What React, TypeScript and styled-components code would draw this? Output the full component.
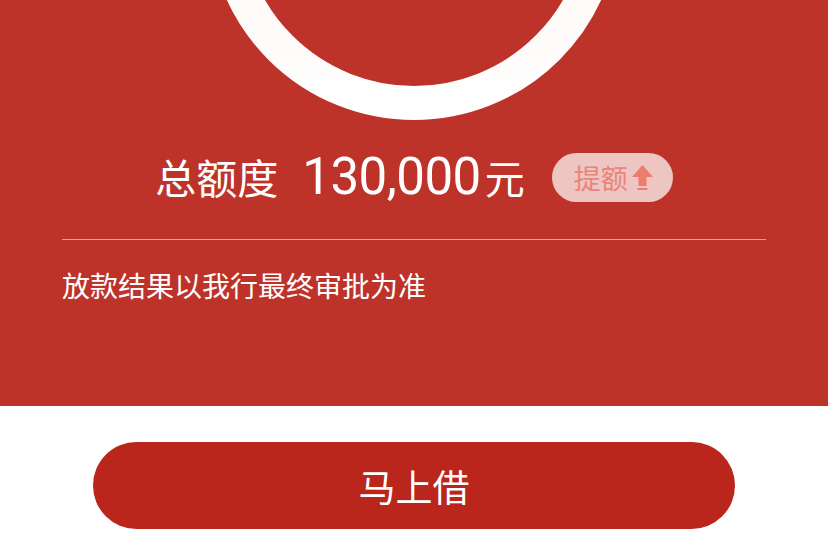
import React from "react";
import styled, { createGlobalStyle } from "styled-components";

const GlobalStyle = createGlobalStyle`
  html, body {
    margin: 0;
    padding: 0;
    background: #ffffff;
  }
  body {
    font-family: "Noto Sans CJK SC", "Liberation Sans", sans-serif;
  }
`;

const RingArt = () => (
  <svg width="828" height="121" viewBox="0 0 828 121">
    <defs>
      <linearGradient id="ringFill" x1="0" y1="0" x2="0" y2="1">
        <stop offset="0" stopColor="#f7ebe3" />
        <stop offset="1" stopColor="#ffffff" />
      </linearGradient>
    </defs>
    <circle
      cx="414"
      cy="-86"
      r="189"
      fill="none"
      stroke="url(#ringFill)"
      strokeWidth="34"
    />
  </svg>
);

const UpArrow = () => (
  <svg width="21" height="26" viewBox="0 0 21 26">
    <path d="M10.5 0 L21 12 L14.5 12 L14.5 21 L6.5 21 L6.5 12 L0 12 Z" fill="#ec7d6e" />
    <rect x="5.5" y="23" width="10" height="2" fill="#ec7d6e" />
  </svg>
);

export default function App() {
  return (
    <Page>
      <GlobalStyle />
      <Hero>
        <RingWrap>
          <RingArt />
        </RingWrap>
        <AmountRow>
          <Amount>
            <Label>总额度</Label>
            <Digits>130,000</Digits>
            <Unit>元</Unit>
          </Amount>
          <RaiseBadge>
            提额
            <UpArrow />
          </RaiseBadge>
        </AmountRow>
        <Divider />
        <Note>放款结果以我行最终审批为准</Note>
      </Hero>
      <Footer>
        <BorrowButton>马上借</BorrowButton>
      </Footer>
    </Page>
  );
}

const Page = styled.div`
  width: 828px;
  height: 546px;
  overflow: hidden;
  background: #ffffff;
`;

const Hero = styled.section`
  height: 406px;
  background: #be3329;
  display: flex;
  flex-direction: column;
`;

const RingWrap = styled.div`
  height: 121px;
  line-height: 0;
`;

const AmountRow = styled.div`
  margin-top: 32px;
  height: 49px;
  display: flex;
  align-items: center;
  justify-content: center;
  gap: 27px;
`;

const Amount = styled.div`
  display: flex;
  align-items: baseline;
  color: #ffffff;
  line-height: 1;
  transform: translateY(-1px);
`;

const Label = styled.span`
  font-family: "Noto Sans CJK SC", sans-serif;
  font-size: 41px;
  margin-right: 24px;
`;

const Digits = styled.span`
  font-family: "Roboto", "Liberation Sans", sans-serif;
  font-weight: 400;
  font-size: 51px;
  letter-spacing: -0.5px;
`;

const Unit = styled.span`
  font-family: "Noto Sans CJK SC", sans-serif;
  font-size: 40px;
  margin-left: 4px;
`;

const RaiseBadge = styled.div`
  height: 49px;
  width: 121px;
  box-sizing: border-box;
  border-radius: 25px;
  background: #edc5c2;
  color: #ea8478;
  font-size: 27px;
  display: flex;
  align-items: center;
  justify-content: center;
  gap: 4px;
  padding-left: 2px;
`;

const Divider = styled.hr`
  margin: 37px 62px 0;
  border: none;
  height: 1px;
  background: rgba(255, 255, 255, 0.55);
`;

const Note = styled.p`
  margin: 27px 62px 0;
  color: #ffffff;
  font-size: 28px;
  line-height: 36px;
`;

const Footer = styled.div`
  padding-top: 36px;
  display: flex;
  justify-content: center;
`;

const BorrowButton = styled.button`
  width: 642px;
  height: 87px;
  border: none;
  border-radius: 44px;
  background: #ba251c;
  color: #ffffff;
  font-family: "Noto Sans CJK SC", sans-serif;
  font-size: 37px;
  padding: 0;
  display: flex;
  align-items: center;
  justify-content: center;
`;
